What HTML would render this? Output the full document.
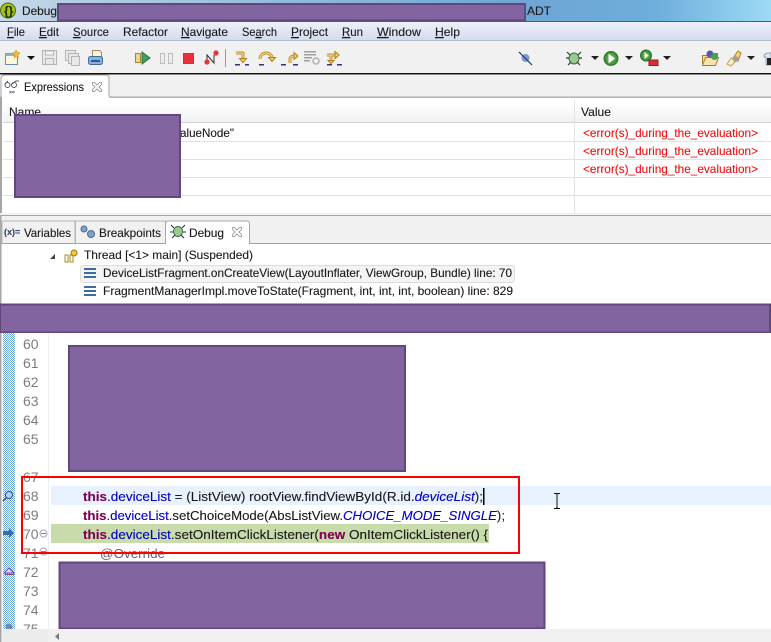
<!DOCTYPE html>
<html><head><meta charset="utf-8"><title>Debug ADT</title>
<style>
html,body{margin:0;padding:0;background:#fff;overflow:hidden}
svg{display:block}
text{font-family:"Liberation Sans",sans-serif;font-size:12px;fill:#1a1a1a;white-space:pre;stroke:#1a1a1a;stroke-width:.12px}
.c{font-size:13px}
.n{font-size:14px;fill:#7d7d7d;stroke:none}
.k{font-weight:bold;fill:#7f0055;stroke:#7f0055}
.f{fill:#0000c0;stroke:#0000c0}
.e{fill:#f01010;font-size:12px;stroke:#f01010}
.p{fill:#8264a0;stroke:#60487c;stroke-width:2}
</style></head><body>
<svg width="771" height="642" viewBox="0 0 771 642" xmlns="http://www.w3.org/2000/svg">
<defs>
<linearGradient id="tb" x1="0" x2="1" y1="0" y2="0"><stop offset="0" stop-color="#c9d9e8"/><stop offset=".1" stop-color="#b4cde4"/><stop offset=".68" stop-color="#6ea5d4"/><stop offset=".85" stop-color="#6eaedc"/><stop offset="1" stop-color="#9cdaf6"/></linearGradient>
<linearGradient id="mb" x1="0" x2="0" y1="0" y2="1"><stop offset="0" stop-color="#eef1fa"/><stop offset="1" stop-color="#d3daee"/></linearGradient>
<linearGradient id="hd" x1="0" x2="0" y1="0" y2="1"><stop offset="0" stop-color="#fff"/><stop offset="1" stop-color="#f0f1f2"/></linearGradient>
<pattern id="dither" width="2" height="2" patternUnits="userSpaceOnUse"><rect width="2" height="2" fill="#fff"/><rect width="1" height="1" fill="#6aa6e6"/><rect x="1" y="1" width="1" height="1" fill="#6aa6e6"/></pattern>
<radialGradient id="gb"><stop offset="0" stop-color="#7cc860"/><stop offset="1" stop-color="#2f8a2f"/></radialGradient>
</defs>

<!-- title bar -->
<rect width="771" height="21" fill="url(#tb)"/>
<circle cx="8" cy="10.500" r="7.500" fill="#a4c414" stroke="#4c6a10"/>
<text x="4" y="15" font-weight="bold" style="font-size:12px;fill:#20300a">{}</text>
<text x="22" y="15" textLength="35" lengthAdjust="spacingAndGlyphs">Debug</text>
<text x="527" y="15" textLength="24" lengthAdjust="spacingAndGlyphs">ADT</text>
<rect x="58" y="4" width="467" height="16.500" class="p"/>
<rect y="21" width="771" height="1" fill="#44607c"/>

<!-- menu -->
<rect y="22" width="771" height="19" fill="url(#mb)"/>
<rect y="40" width="771" height="1" fill="#b8bfd0"/>
<text x="7" y="36" textLength="18" lengthAdjust="spacingAndGlyphs"><tspan text-decoration="underline">F</tspan>ile</text>
<text x="39" y="36" textLength="20" lengthAdjust="spacingAndGlyphs"><tspan text-decoration="underline">E</tspan>dit</text>
<text x="73" y="36" textLength="36" lengthAdjust="spacingAndGlyphs"><tspan text-decoration="underline">S</tspan>ource</text>
<text x="123" y="36" textLength="45" lengthAdjust="spacingAndGlyphs">Refactor</text>
<text x="181" y="36" textLength="47" lengthAdjust="spacingAndGlyphs"><tspan text-decoration="underline">N</tspan>avigate</text>
<text x="242" y="36" textLength="35" lengthAdjust="spacingAndGlyphs">Se<tspan text-decoration="underline">a</tspan>rch</text>
<text x="291" y="36" textLength="37" lengthAdjust="spacingAndGlyphs"><tspan text-decoration="underline">P</tspan>roject</text>
<text x="342" y="36" textLength="21" lengthAdjust="spacingAndGlyphs"><tspan text-decoration="underline">R</tspan>un</text>
<text x="377" y="36" textLength="44" lengthAdjust="spacingAndGlyphs"><tspan text-decoration="underline">W</tspan>indow</text>
<text x="435" y="36" textLength="25" lengthAdjust="spacingAndGlyphs"><tspan text-decoration="underline">H</tspan>elp</text>

<!-- toolbar -->
<rect y="41" width="771" height="32" fill="#f1f1f1"/>
<rect y="73" width="771" height="1.500" fill="#111"/>
<!-- new -->
<rect x="5.500" y="53.500" width="12" height="11" fill="#fff8d8" stroke="#6a8ab0"/><rect x="5.500" y="53.500" width="12" height="2.500" fill="#8fb0d8"/><path d="M16 50l1.500 2.500 2.500.5-2 2 .5 3-2.500-1.500-2 1.500.5-3-2-2 2.500-.5z" fill="#f0c030" stroke="#b08010" stroke-width=".5"/>
<path d="M27 56h8l-4 4z" fill="#111"/>
<!-- save -->
<g fill="#e8e8e8" stroke="#b4b4b4"><path d="M42.500 50.500h14v14h-14z"/><path d="M45.500 58.500h8v6h-8z"/><path d="M45.500 51h8v4h-8z" fill="#f6f6f6"/></g>
<g fill="#e8e8e8" stroke="#b4b4b4"><path d="M65.500 50.500h10v10h-10z"/><path d="M68.500 53.500h10v10h-10z"/><path d="M71.500 56.500h8v9h-8z"/></g>
<!-- print -->
<path d="M92.500 50.500h7l2 2v6h-9z" fill="#fff6d8" stroke="#a09060"/><rect x="88.500" y="56.500" width="14" height="8" rx="2" fill="#8cb0dc" stroke="#406c9c"/><rect x="91" y="60" width="9" height="2" fill="#2c5c90"/>
<!-- resume -->
<rect x="135.500" y="53.500" width="5" height="9" fill="#e8d890" stroke="#a08830"/><path d="M142 52l8 6-8 6z" fill="#48a060" stroke="#307040"/>
<g fill="#eee" stroke="#bdbdbd"><rect x="160.500" y="53.500" width="4" height="10"/><rect x="168.500" y="53.500" width="4" height="10"/></g>
<rect x="183.500" y="53.500" width="10" height="10" fill="#e8303c" stroke="#b04040"/>
<path d="M207 63v-8l7 8v-8" fill="none" stroke="#303030"/><circle cx="207" cy="62" r="2.600" fill="#e83040"/><circle cx="216" cy="53" r="2.600" fill="#e83040"/>
<rect x="225" y="49" width="1" height="18" fill="#999"/>
<!-- step icons: tan outline with pale core -->
<g fill="none" stroke="#c08c24" stroke-width="3" stroke-linejoin="round"><path d="M236 53h7v5"/><path d="M260 59c0-7 10-8 12-2"/><path d="M290 63v-4c0-2 2-3 4-3"/><path d="M327 55h8M331 55v5"/></g>
<g fill="none" stroke="#f8e4a0" stroke-width="1" stroke-linejoin="round"><path d="M236 53h7v5"/><path d="M260 59c0-7 10-8 12-2"/><path d="M290 63v-4c0-2 2-3 4-3"/><path d="M327 55h8M331 55v5"/></g>
<g fill="#f4d060" stroke="#b08020"><path d="M239.500 58.500h7l-3.500 4z"/><path d="M268.500 57.500h7l-3.500 4z"/><path d="M294 52.500l4 3.500-4 3.500z"/><path d="M335 51.500l4 3.500-4 3.500z"/><path d="M328 60.500h6l-3 3z"/></g>
<g fill="#283c68"><rect x="235" y="64" width="5" height="1.500"/><rect x="245" y="64" width="4" height="1.500"/><rect x="259" y="64" width="5" height="1.500"/><rect x="281" y="64" width="5" height="1.500"/><rect x="293" y="64" width="5" height="1.500"/><rect x="327" y="64" width="5" height="1.500"/><rect x="337" y="64" width="5" height="1.500"/></g>
<g fill="#a0a0a0"><rect x="304" y="51" width="12" height="1.500"/><rect x="304" y="54" width="12" height="1.500"/><rect x="304" y="57" width="8" height="1.500"/><rect x="304" y="60" width="6" height="1.500"/></g>
<circle cx="316" cy="61" r="3" fill="none" stroke="#b0b0b0" stroke-width="1.500"/>
<!-- skip -->
<circle cx="525.500" cy="58" r="4" fill="#7c9cc4"/><path d="M519 52l13 13" stroke="#1a3090" stroke-width="1.200"/>
<!-- debug bug -->
<ellipse cx="574" cy="58.500" rx="5" ry="5.500" fill="#9cc890" stroke="#3c6c4c"/><path d="M567 52l3 3M581 52l-3 3M566 58h3M579 58h3M568 65l3-3M580 65l-3-3" stroke="#20402c" stroke-width="1.200"/>
<path d="M591 56h8l-4 4z" fill="#222"/>
<circle cx="611" cy="58.500" r="7" fill="url(#gb)" stroke="#2c7030"/><path d="M608.500 53.500l6.500 5-6.500 5z" fill="#fff"/>
<path d="M625 56h8l-4 4z" fill="#222"/>
<circle cx="646" cy="55.500" r="5.500" fill="url(#gb)" stroke="#2c7030"/><path d="M644.500 52l4 3.500-4 3.500z" fill="#fff"/>
<rect x="649" y="60" width="9" height="5.500" fill="#d83030" stroke="#902020"/>
<path d="M663 56h8l-4 4z" fill="#222"/>
<!-- open type -->
<path d="M702.500 63.500v-8h5l1-2h9v4" fill="#f8dc90" stroke="#a87830"/><path d="M702.500 65.500l3-8h13l-3 8z" fill="#f8e4a8" stroke="#a87830"/><circle cx="710" cy="54" r="3.500" fill="#6050b0"/><circle cx="714.500" cy="56.500" r="3.500" fill="#48a050"/>
<!-- search torch -->
<path d="M727 64l4-6 5 3-5 5z" fill="#f8f0c0" stroke="#c8a050"/><path d="M733 58l5-7 3 2-3 8z" fill="#f8d070" stroke="#b08020"/><circle cx="735.500" cy="59" r="3" fill="#a0a0a0"/>
<path d="M747 56h8l-4 4z" fill="#222"/>
<path d="M764 55l3-2h4v12h-5v-8h-2z" fill="#dce6f0" stroke="#8090a0" stroke-width=".8"/><rect x="767" y="58" width="4" height="7" fill="#222"/>

<!-- expressions panel -->
<rect y="75" width="771" height="22" fill="#f1f1f1"/>
<rect y="96.500" width="771" height="1.300" fill="#a6a6a6"/>
<path d="M1 98V79q0-4 4-4h101q3 0 3 3v19" fill="#fff" stroke="#a6a6a6"/>
<rect x="0" y="97" width="2" height="120" fill="#a6a6a6"/>
<rect x="2" y="96" width="107" height="3" fill="#fff"/>
<g fill="none" stroke="#505a68" stroke-width="1"><circle cx="7.500" cy="85" r="2.500"/><circle cx="14" cy="85" r="2.500"/><path d="M5 84l3-3M12 84l4-3 3 0"/></g>
<text x="9" y="94" style="font-size:5px;fill:#333">×=</text>
<text x="24" y="91" textLength="60" lengthAdjust="spacingAndGlyphs">Expressions</text>
<path d="M92.500 82.500l2 0 2.500 2.500 2.500-2.500 2 0 0 2-2.500 2.500 2.500 2.500 0 2-2 0-2.500-2.500-2.500 2.500-2 0 0-2 2.500-2.500-2.500-2.500z" fill="#fff" stroke="#8c8c8c" stroke-width=".8"/>
<rect x="3" y="98" width="768" height="119" fill="#fff"/>
<rect x="3" y="104" width="768" height="18" fill="url(#hd)"/>
<rect x="3" y="122" width="768" height="1" fill="#d4d4d4"/>
<rect x="574" y="100" width="1" height="113" fill="#e4e4e4"/>
<text x="9" y="116" textLength="32" lengthAdjust="spacingAndGlyphs">Name</text>
<text x="581" y="116" textLength="30" lengthAdjust="spacingAndGlyphs">Value</text>
<g fill="#e2e2e2"><rect x="3" y="141" width="768" height="1"/><rect x="3" y="159" width="768" height="1"/><rect x="3" y="177" width="768" height="1"/><rect x="3" y="195" width="768" height="1"/></g>
<text x="180" y="137" textLength="54" lengthAdjust="spacingAndGlyphs">alueNode"</text>
<text class="e" x="583" y="137" textLength="175" lengthAdjust="spacingAndGlyphs">&lt;error(s)_during_the_evaluation&gt;</text>
<text class="e" x="583" y="155" textLength="175" lengthAdjust="spacingAndGlyphs">&lt;error(s)_during_the_evaluation&gt;</text>
<text class="e" x="583" y="173" textLength="175" lengthAdjust="spacingAndGlyphs">&lt;error(s)_during_the_evaluation&gt;</text>
<rect x="15" y="115" width="165" height="82" class="p"/>

<!-- debug panel -->
<rect y="213" width="771" height="31" fill="#f1f1f1"/>
<rect y="215" width="771" height="1" fill="#a6a6a6"/>
<rect y="243" width="771" height="1" fill="#a6a6a6"/>
<rect y="216" width="1.500" height="88" fill="#a6a6a6"/>
<path d="M2 243v-20q0-2 2-2h71v22" fill="#f1f1f1" stroke="#b8b8b8"/>
<path d="M75.500 243v-22h90v22" fill="#f1f1f1" stroke="#b8b8b8"/>
<path d="M165.500 244v-20q0-3 3-3h78q3 0 3 3v20" fill="#fff" stroke="#a6a6a6"/>
<rect x="166" y="242" width="83" height="3" fill="#fff"/>
<text x="4" y="235" style="font-size:9px;font-weight:bold;fill:#3c4c78">(x)=</text>
<text x="24" y="237" textLength="47" lengthAdjust="spacingAndGlyphs">Variables</text>
<circle cx="84" cy="229" r="3" fill="#7ca4c8" stroke="#4c6c90"/><circle cx="91" cy="234" r="3.500" fill="#7ca4c8" stroke="#4c6c90"/>
<text x="99" y="237" textLength="62" lengthAdjust="spacingAndGlyphs">Breakpoints</text>
<ellipse cx="178" cy="231.500" rx="4.500" ry="5" fill="#9cc890" stroke="#3c6c4c"/><path d="M171 225l3 3M185 225l-3 3M170 232h3M183 232h3M172 238l3-3M184 238l-3-3" stroke="#20402c" stroke-width="1.100"/>
<text x="189" y="237" textLength="35" lengthAdjust="spacingAndGlyphs">Debug</text>
<path d="M232.500 227.500l2 0 2.500 2.500 2.500-2.500 2 0 0 2-2.500 2.500 2.500 2.500 0 2-2 0-2.500-2.500-2.500 2.500-2 0 0-2 2.500-2.500-2.500-2.500z" fill="#fff" stroke="#8c8c8c" stroke-width=".8"/>
<rect x="2" y="244" width="769" height="60" fill="#fff"/>
<path d="M50 259l5-5v5z" fill="#444"/>
<rect x="65" y="255" width="3" height="7" fill="none" stroke="#a88820"/><rect x="70" y="255" width="3" height="7" fill="none" stroke="#a88820"/><circle cx="74" cy="253" r="3" fill="#f0c840" stroke="#a07810"/>
<text x="84" y="259" textLength="169" lengthAdjust="spacingAndGlyphs">Thread [&lt;1&gt; main] (Suspended)</text>
<rect x="80.500" y="265.500" width="434" height="17" rx="3" fill="#f4f4f4" stroke="#dcdcdc"/>
<g fill="#3c6ca4"><rect x="84" y="268" width="12" height="2"/><rect x="84" y="272" width="12" height="2"/><rect x="84" y="276" width="12" height="2"/><rect x="84" y="286" width="12" height="2"/><rect x="84" y="290" width="12" height="2"/><rect x="84" y="294" width="12" height="2"/></g>
<text x="103" y="277" textLength="409" lengthAdjust="spacingAndGlyphs">DeviceListFragment.onCreateView(LayoutInflater, ViewGroup, Bundle) line: 70</text>
<text x="103" y="295" textLength="410" lengthAdjust="spacingAndGlyphs">FragmentManagerImpl.moveToState(Fragment, int, int, int, boolean) line: 829</text>

<rect x="0" y="304.500" width="770" height="28" class="p"/>

<!-- editor -->
<rect y="333" width="771" height="296" fill="#fff"/>
<rect y="333" width="1.500" height="309" fill="#a6a6a6"/>
<rect x="3" y="333" width="12" height="296" fill="url(#dither)"/>
<rect x="48" y="333" width="1" height="296" fill="#eee"/>
<g>
<text class="n" x="23" y="349">60</text><text class="n" x="23" y="368">61</text><text class="n" x="23" y="387">62</text><text class="n" x="23" y="406">63</text><text class="n" x="23" y="425">64</text><text class="n" x="23" y="444">65</text><text class="n" x="23" y="482">67</text><text class="n" x="23" y="501">68</text><text class="n" x="23" y="520">69</text><text class="n" x="23" y="539">70</text><text class="n" x="23" y="558">71</text><text class="n" x="23" y="577">72</text><text class="n" x="23" y="596">73</text><text class="n" x="23" y="615">74</text><text class="n" x="23" y="634">75</text>
</g>
<rect x="51" y="486" width="720" height="19" fill="#e8f2fe"/>
<rect x="51" y="524" width="438" height="19" fill="#c7dbab"/>
<rect x="483" y="488" width="1.500" height="17" fill="#000"/>
<text class="c" x="83" y="501" textLength="400" lengthAdjust="spacingAndGlyphs"><tspan class="k">this</tspan><tspan class="f">.deviceList</tspan> = (ListView) rootView.findViewById(R.id.<tspan class="f" font-style="italic">deviceList</tspan>);</text>
<text class="c" x="83" y="520" textLength="422" lengthAdjust="spacingAndGlyphs"><tspan class="k">this</tspan><tspan class="f">.deviceList</tspan>.setChoiceMode(AbsListView.<tspan class="f" font-style="italic">CHOICE_MODE_SINGLE</tspan>);</text>
<text class="c" x="83" y="539" textLength="405" lengthAdjust="spacingAndGlyphs"><tspan class="k">this</tspan><tspan class="f">.deviceList</tspan>.setOnItemClickListener(<tspan class="k">new</tspan> OnItemClickListener() {</text>
<text class="c" x="100" y="558" textLength="65" lengthAdjust="spacingAndGlyphs" style="fill:#646464;stroke:none">@Override</text>
<g fill="#fff" stroke="#a0aab8"><circle cx="43.500" cy="533.500" r="3.500"/><circle cx="43.500" cy="551.500" r="3.500"/></g>
<path d="M41 533.500h5M41 551.500h5" stroke="#7888a0"/>
<!-- markers -->
<circle cx="9" cy="495" r="3.500" fill="#b8d0e8" stroke="#305080"/><path d="M6 498l-3 3" stroke="#305080" stroke-width="1.500"/>
<path d="M3 531h6v-3l5 5-5 5v-3H3z" fill="#3c6ca4"/>
<path d="M4 573l5-5 5 5z" fill="#e8d8f0" stroke="#704898"/>
<rect x="5" y="574" width="9" height="1" fill="#704898"/>
<circle cx="9" cy="627" r="3.500" fill="#6c8cb0"/>
<rect x="69" y="346" width="336" height="125" class="p"/>
<rect x="22" y="477" width="497" height="76" fill="none" stroke="#fe0000" stroke-width="2"/>
<rect x="59.500" y="562.500" width="485" height="66" class="p"/>
<!-- i-beam -->
<path d="M554 493.500h2.500l.5 1 .5-1h2.500M557 494.500v13M554 508.500h2.500l.5-1 .5 1h2.500" fill="none" stroke="#111"/>
<!-- scrollbar -->
<rect x="2" y="629" width="769" height="13" fill="#ececec"/>
<rect x="48" y="629" width="723" height="13" fill="#f0f0f0"/>
<path d="M59 633l-4 3.500 4 3.500z" fill="#777"/>
</svg>
</body></html>
